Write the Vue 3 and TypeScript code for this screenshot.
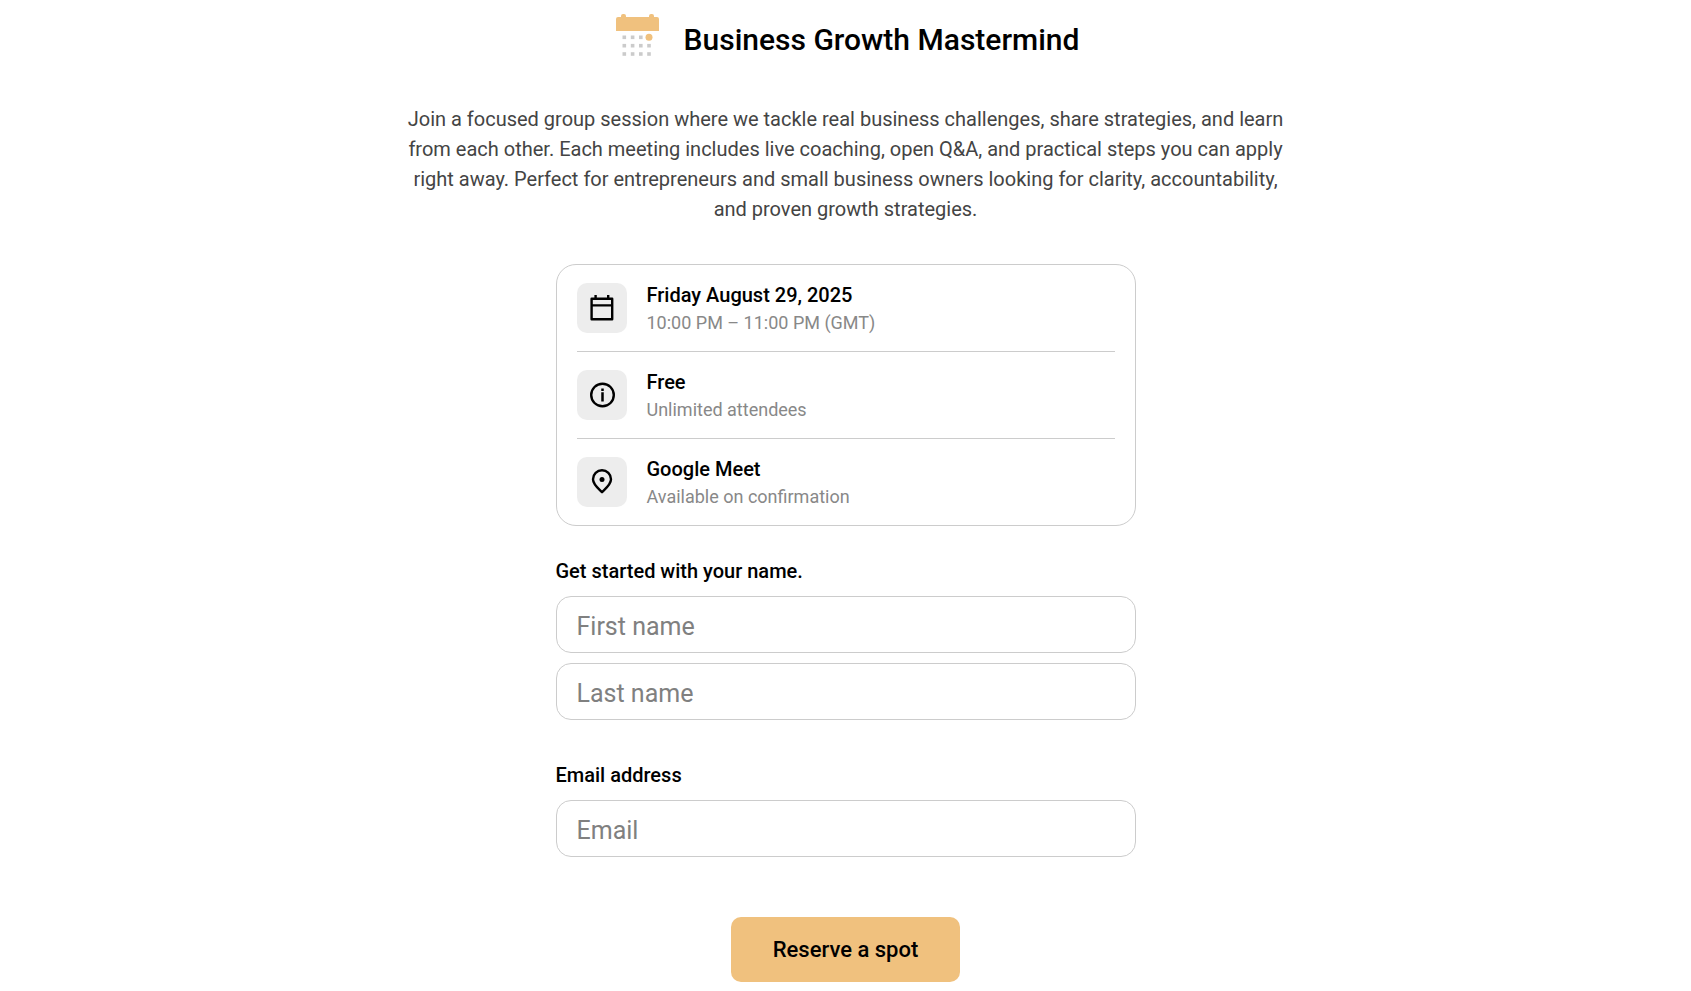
<script setup lang="ts">
import { ref } from 'vue'

type IconName = 'calendar' | 'info' | 'pin'

interface Detail {
  icon: IconName
  title: string
  note: string
}

const details: Detail[] = [
  { icon: 'calendar', title: 'Friday August 29, 2025', note: '10:00 PM – 11:00 PM (GMT)' },
  { icon: 'info', title: 'Free', note: 'Unlimited attendees' },
  { icon: 'pin', title: 'Google Meet', note: 'Available on confirmation' },
]

const dotRows: number[] = [23.3, 31.7, 40]
const dotColumns: number[] = [8.3, 16.6, 24.8, 33]

const firstName = ref('')
const lastName = ref('')
const email = ref('')
</script>

<template>
  <main class="page">
    <header class="heading">
      <svg class="logo" viewBox="0 0 43 43" aria-hidden="true">
        <path
          fill="#f0c17e"
          d="M0 17V5a2 2 0 0 1 2-2h3V2a2 2 0 0 1 2-2h1a2 2 0 0 1 2 2v1h23V2a2 2 0 0 1 2-2h1a2 2 0 0 1 2 2v1h3a2 2 0 0 1 2 2v12z"
        />
        <template v-for="y in dotRows" :key="y">
          <rect v-for="x in dotColumns" :key="x" :x="x - 1.8" :y="y - 1.8" width="3.6" height="3.6" fill="#cbcbcb" />
        </template>
        <circle cx="33" cy="23.3" r="3.5" fill="#f0c17e" />
      </svg>
      <h1>Business Growth Mastermind</h1>
    </header>

    <p class="intro">
      Join a focused group session where we tackle real business challenges, share strategies, and
      learn from each other. Each meeting includes live coaching, open Q&amp;A, and practical steps
      you can apply right away. Perfect for entrepreneurs and small business owners looking for
      clarity, accountability, and proven growth strategies.
    </p>

    <form class="booking" @submit.prevent>
      <ul class="details">
        <li v-for="item in details" :key="item.title" class="detail">
          <span class="tile">
            <svg v-if="item.icon === 'calendar'" viewBox="0 0 30 30" aria-hidden="true">
              <path
                d="M4.6 5.8h20.6v20.4H4.6zM4.6 12.4h20.6M8.6 2v3.5M21.2 2v3.5"
                fill="none"
                stroke="#000"
                stroke-width="2.4"
                stroke-linejoin="round"
              />
            </svg>
            <svg v-else-if="item.icon === 'info'" viewBox="0 0 30 30" aria-hidden="true">
              <circle cx="15.5" cy="15" r="11.3" fill="none" stroke="#000" stroke-width="2.4" />
              <path d="M15.5 12.2v9.2M15.5 8.6v2.4" stroke="#000" stroke-width="2.5" />
            </svg>
            <svg v-else viewBox="0 0 30 30" aria-hidden="true">
              <path
                d="M15 25.2C11.5 21.6 6 17.6 6 12.3a9 9 0 0 1 18 0c0 5.3-5.5 9.3-9 12.9z"
                fill="none"
                stroke="#000"
                stroke-width="2.4"
                stroke-linejoin="round"
              />
              <circle cx="15" cy="12.4" r="2.5" />
            </svg>
          </span>
          <div>
            <h2>{{ item.title }}</h2>
            <p>{{ item.note }}</p>
          </div>
        </li>
      </ul>

      <fieldset class="group">
        <legend>Get started with your name.</legend>
        <input v-model="firstName" type="text" placeholder="First name" aria-label="First name" />
        <input v-model="lastName" type="text" placeholder="Last name" aria-label="Last name" />
      </fieldset>

      <div class="group">
        <label for="email">Email address</label>
        <input id="email" v-model="email" type="email" placeholder="Email" />
      </div>

      <button type="submit">Reserve a spot</button>
    </form>
  </main>
</template>

<style>
body {
  margin: 0;
  background: #fff;
}
</style>

<style scoped>
.page {
  box-sizing: border-box;
  display: flex;
  flex-direction: column;
  align-items: center;
  padding: 14px 20px 0;
  font-family: Roboto, 'Liberation Sans', sans-serif;
  color: #000;
}

h1,
h2,
p,
ul,
fieldset {
  margin: 0;
  padding: 0;
}

.heading {
  display: flex;
  align-items: flex-start;
  gap: 25px;
  padding-left: 4px;
}

.logo {
  width: 43px;
  height: 43px;
}

h1 {
  font-size: 30px;
  font-weight: 500;
  line-height: 52px;
}

.intro {
  max-width: 880px;
  margin-top: 38px;
  font-size: 20px;
  line-height: 30px;
  text-align: center;
  color: #444;
}

.booking {
  display: flex;
  flex-direction: column;
  width: 100%;
  max-width: 580px;
  margin-top: 40px;
}

.details {
  padding: 0 20px;
  border: 1px solid #ccc;
  border-radius: 20px;
  list-style: none;
}

.detail {
  display: flex;
  align-items: flex-start;
  gap: 20px;
  padding: 18px 0 12px;
}

.detail + .detail {
  border-top: 1px solid #ccc;
}

.tile {
  display: flex;
  align-items: center;
  justify-content: center;
  width: 50px;
  height: 50px;
  border-radius: 10px;
  background: #ededed;
}

.tile svg {
  width: 30px;
  height: 30px;
}

h2 {
  font-size: 20px;
  font-weight: 500;
  line-height: 24px;
}

.detail p {
  font-size: 18px;
  line-height: 32px;
  color: #888;
}

.group {
  display: flex;
  flex-direction: column;
  gap: 10px;
  margin-top: 30px;
  border: 0;
}

.group + .group {
  margin-top: 40px;
}

legend,
label {
  padding: 0;
  font-size: 20px;
  font-weight: 500;
  line-height: 30px;
}

legend {
  margin-bottom: 10px;
}

input {
  box-sizing: border-box;
  width: 100%;
  height: 57px;
  padding: 3px 20px 0;
  border: 1px solid #ccc;
  border-radius: 15px;
  background: #fff;
  font-family: inherit;
  font-size: 25px;
  color: #000;
}

input::placeholder {
  color: #808080;
  opacity: 1;
}

button {
  align-self: center;
  margin-top: 60px;
  padding: 0 42px;
  border: 0;
  border-radius: 10px;
  background: #f0c17e;
  font-family: inherit;
  font-size: 22px;
  font-weight: 500;
  line-height: 65px;
  color: #000;
  cursor: pointer;
}
</style>
